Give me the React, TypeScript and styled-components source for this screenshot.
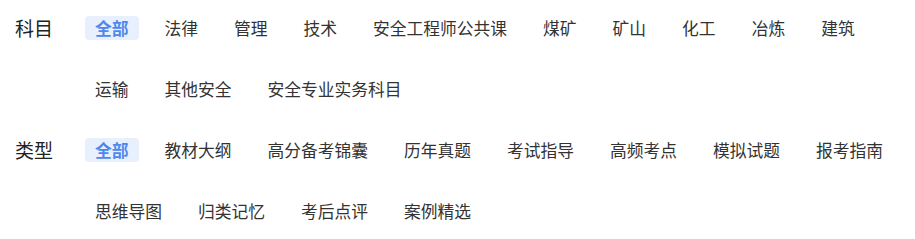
import React, { useState } from "react";
import styled, { createGlobalStyle } from "styled-components";

const GlobalStyle = createGlobalStyle`
  body {
    margin: 0;
    background: #fff;
    font-family: "Noto Sans CJK SC", "Noto Sans", sans-serif;
  }
`;

const Wrapper = styled.div`
  display: flex;
  flex-direction: column;
  gap: 37px;
  padding: 16px 0 0 15px;
`;

const Group = styled.div`
  display: flex;
  align-items: flex-start;
`;

const Label = styled.div`
  width: 70px;
  flex-shrink: 0;
  font-size: 19px;
  line-height: 23px;
  color: #222;
`;

const Options = styled.div`
  display: flex;
  flex-wrap: wrap;
  column-gap: 16px;
  row-gap: 37px;
  flex: 1;
`;

const Option = styled.span<{ $active?: boolean }>`
  display: inline-flex;
  align-items: center;
  height: 24px;
  padding: 0 10px;
  border-radius: 4px;
  font-size: 16.75px;
  line-height: 22px;
  white-space: nowrap;
  cursor: pointer;
  color: ${(p) => (p.$active ? "#4d88ee" : "#333")};
  background: ${(p) => (p.$active ? "#e9f0fd" : "transparent")};
  font-weight: ${(p) => (p.$active ? 700 : 400)};
`;

const groups = [
  {
    title: "科目",
    items: [
      "全部",
      "法律",
      "管理",
      "技术",
      "安全工程师公共课",
      "煤矿",
      "矿山",
      "化工",
      "冶炼",
      "建筑",
      "运输",
      "其他安全",
      "安全专业实务科目",
    ],
  },
  {
    title: "类型",
    items: [
      "全部",
      "教材大纲",
      "高分备考锦囊",
      "历年真题",
      "考试指导",
      "高频考点",
      "模拟试题",
      "报考指南",
      "思维导图",
      "归类记忆",
      "考后点评",
      "案例精选",
    ],
  },
];

const FilterGroup: React.FC<{ title: string; items: string[] }> = ({
  title,
  items,
}) => {
  const [active, setActive] = useState(0);
  return (
    <Group>
      <Label>{title}</Label>
      <Options>
        {items.map((item, i) => (
          <Option key={item} $active={i === active} onClick={() => setActive(i)}>
            {item}
          </Option>
        ))}
      </Options>
    </Group>
  );
};

const App: React.FC = () => {
  return (
    <>
      <GlobalStyle />
      <Wrapper>
        {groups.map((g) => (
          <FilterGroup key={g.title} title={g.title} items={g.items} />
        ))}
      </Wrapper>
    </>
  );
};

export default App;
